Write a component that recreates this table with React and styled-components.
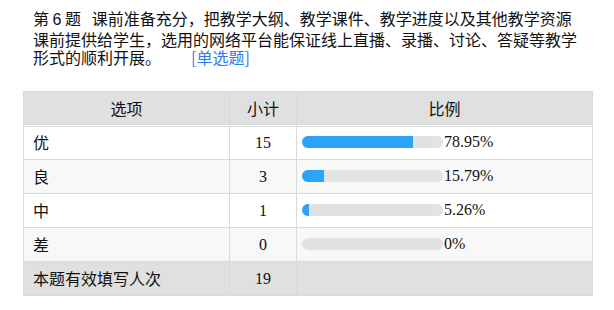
import React from 'react'
import styled, {createGlobalStyle} from 'styled-components'

const GlobalStyle = createGlobalStyle`
  html, body {
    margin: 0;
    padding: 0;
    background: #ffffff;
  }
  body {
    font-family: "Noto Sans CJK SC", "Liberation Sans", sans-serif;
    color: #111;
  }
`;

const Page = styled.div`
  padding: 9px 0 0 23px;
  width: 570px;
`;

const Question = styled.div`
  padding: 0 9px 0 10px;
  font-size: 16px;
  line-height: 18.6px;
  color: #111;
  margin-bottom: 24px;
`;

const Num = styled.span`
  font-family: "Liberation Sans", sans-serif;
`;

const TypeTag = styled.span`
  margin-left: 30px;
  color: #2a7cf0;
`;

const Table = styled.table`
  width: 570px;
  border-collapse: separate;
  border-spacing: 0;
  border-left: 1px solid #d9d9d9;
  border-top: 1px solid #d9d9d9;
  table-layout: fixed;
  font-size: 16px;
`;

const Th = styled.th`
  background: #e0e0e0;
  font-weight: normal;
  line-height: 32px;
  padding: 0;
  text-align: center;
  color: #111;
  border-right: 1px solid #d9d9d9;
  border-bottom: 1px solid #d9d9d9;
`;

const Row = styled.tr`
  background: ${(props) => props.$bg};

  &:first-child td {
    border-top: 1px solid #ffffff;
    box-shadow: inset 0 1px 0 #d9d9d9;
  }
`;

const Td = styled.td`
  padding: 0 ${(props) => (props.$align === 'left' ? '9px' : '0')} 0 ${(props) => (props.$align === 'left' ? '9px' : '5px')};
  height: 33px;
  line-height: 33px;
  text-align: ${(props) => props.$align || 'left'};
  border-right: 1px solid #d9d9d9;
  border-bottom: 1px solid #d9d9d9;
  font-family: ${(props) => (props.$serif ? '"Liberation Serif", serif' : '"Noto Sans CJK SC", sans-serif')};
  white-space: nowrap;
  color: #111;
`;

const CountTd = styled(Td)`
  padding: 0;
`;

const BarCell = styled.div`
  display: flex;
  align-items: center;
  height: 33px;
`;

const Track = styled.span`
  display: block;
  flex: none;
  width: 141px;
  height: 12px;
  border-radius: 6px;
  background: #e2e2e4;
  overflow: hidden;
`;

const Fill = styled.span`
  display: block;
  height: 100%;
  background: #2ba3f6;
`;

const Percent = styled.span`
  font-family: "Liberation Serif", serif;
  line-height: 18px;
  margin-left: 1px;
`;

const rows = [
    {label: '优', count: 15, pct: 78.95},
    {label: '良', count: 3, pct: 15.79},
    {label: '中', count: 1, pct: 5.26},
    {label: '差', count: 0, pct: 0},
];

const App = () => {
    return (
        <Page>
            <GlobalStyle/>
            <Question>
                第 <Num>6</Num> 题&nbsp;&nbsp; 课前准备充分，把教学大纲、教学课件、教学进度以及其他教学资源课前提供给学生，选用的网络平台能保证线上直播、录播、讨论、答疑等教学形式的顺利开展。
                <TypeTag>[单选题]</TypeTag>
            </Question>

            <Table>
                <colgroup>
                    <col style={{width: 206}}/>
                    <col style={{width: 67}}/>
                    <col/>
                </colgroup>
                <thead>
                <tr>
                    <Th>选项</Th>
                    <Th>小计</Th>
                    <Th>比例</Th>
                </tr>
                </thead>
                <tbody>
                {rows.map((r, i) => (
                    <Row key={r.label} $bg={i % 2 ? '#f8f8f8' : '#ffffff'}>
                        <Td $align="left">{r.label}</Td>
                        <CountTd $align="center" $serif>{r.count}</CountTd>
                        <Td>
                            <BarCell>
                                <Track><Fill style={{width: r.pct + '%'}}/></Track>
                                <Percent>{r.pct}%</Percent>
                            </BarCell>
                        </Td>
                    </Row>
                ))}
                <Row $bg="#e0e0e0">
                    <Td $align="left">本题有效填写人次</Td>
                    <CountTd $align="center" $serif>19</CountTd>
                    <Td/>
                </Row>
                </tbody>
            </Table>
        </Page>
    )
}

export default App;
